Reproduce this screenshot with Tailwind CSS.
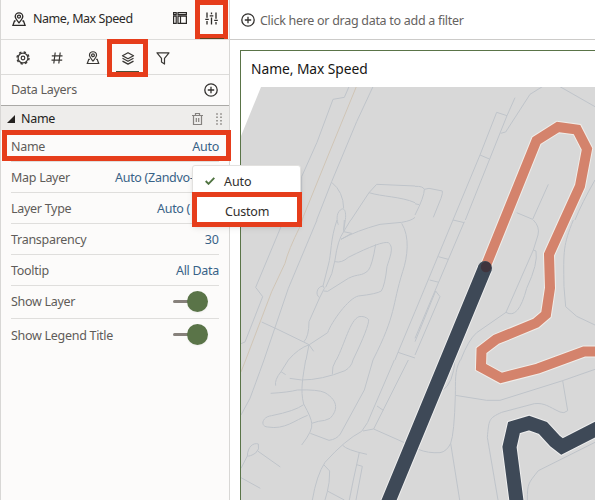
<!DOCTYPE html>
<html lang="en">
<head>
<meta charset="utf-8">
<title>Name, Max Speed</title>
<script src="https://cdn.jsdelivr.net/npm/@tailwindcss/browser@4"></script>
</head>
<body class="relative flex h-[500px] w-[595px] overflow-hidden bg-white font-['Noto_Sans','Open_Sans',sans-serif] text-[12.5px] tracking-[-0.29px] text-[#5f5c59]">
<svg class="hidden">
  <symbol id="pin" viewBox="0 0 14 15"><g fill="none" stroke="currentColor" stroke-width="1.300"><path d="M7 10.8C5.200 8.600 3.200 6.700 3.200 4.600a3.800 3.800 0 0 1 7.600 0C10.800 6.700 8.800 8.600 7 10.800Z"/><circle cx="7" cy="4.600" r="1.500"/><path d="M3.600 9H2.500L.9 13.400H13.100L11.500 9H10.400"/></g></symbol>
  <symbol id="plus" viewBox="0 0 14 14"><g fill="none" stroke="currentColor" stroke-width="1.300"><circle cx="7" cy="7" r="6.200"/><path d="M7 3.800v6.400M3.800 7h6.400"/></g></symbol>
</svg>

<aside class="flex w-[230px] shrink-0 flex-col border-x border-[#d8d7d5] bg-[#fcfbfa]">
  <header class="flex h-10 shrink-0 items-center border-b border-[#dddcda] pl-[11px] text-[#2b2927]">
    <svg class="h-[15px] w-[14px]"><use href="#pin"/></svg>
    <h1 class="ml-[7px] w-[140px] whitespace-nowrap pb-px text-[12.5px] tracking-[-0.45px]">Name, Max Speed</h1>
    <svg class="-mt-1 h-3 w-[14px]" viewBox="0 0 14 12" fill="none" stroke="currentColor" stroke-width="1.200"><path d="M.6.600h2.600v2H.6zM.6 4.200h2.600v7.200H.6zM5 .6h8.400v2H5zM5 4.200h8.400v7.200H5zM7.500 4.200v7.200"/></svg>
    <svg class="-mt-[3px] ml-[18px] h-[13px] w-[13px]" viewBox="0 0 13 13" fill="none" stroke="currentColor" stroke-width="1.300"><path d="M2 .5v5.300M2 9v3.500M6.500.5v1.800M6.500 5.500v7M11 .5v6.300M11 10v2.500M.3 7.300h3.500M4.700 3.800h3.600M9.200 8.300h3.600"/></svg>
  </header>
  <nav class="flex h-[35px] shrink-0 items-center border-b border-[#dddcda] pl-[14.500px] pt-[2px] text-[#3a3835]">
    <svg class="h-[14px] w-[14px]" viewBox="0 0 14 14" fill="none" stroke="currentColor"><circle cx="7" cy="7" r="4.900" stroke-width="1.200"/><circle cx="7" cy="7" r="6" stroke-width="1.400" stroke-dasharray="2.350 2.360"/><circle cx="7" cy="7" r="1.800" stroke-width="1.200"/></svg>
    <svg class="ml-[21px] h-3 w-3" viewBox="0 0 12 12" fill="none" stroke="currentColor" stroke-width="1.200"><path d="M4.200.5 2.800 11.500M9.200.5 7.800 11.500M.8 3.800h10.700M.5 8.200h10.700"/></svg>
    <svg class="ml-[23px] h-[14px] w-[14px]"><use href="#pin"/></svg>
    <svg class="ml-[21px] h-[13px] w-[14px]" viewBox="0 0 14 13" fill="none" stroke="currentColor" stroke-width="1.300" stroke-linejoin="round"><path d="M7 .7 12.500 3.700 7 6.700 1.500 3.700ZM1.500 6.300l5.500 3 5.500-3M1.500 9.100l5.500 3 5.500-3"/></svg>
    <svg class="ml-[21px] h-[13px] w-[14px]" viewBox="0 0 14 13" fill="none" stroke="currentColor" stroke-width="1.200" stroke-linejoin="round"><path d="M1 .8h12L8.500 6.300v5.800l-3-2V6.300Z"/></svg>
  </nav>
  <div class="flex h-[31px] shrink-0 items-center justify-between border-b border-[#aaa9a6] pl-[10px] pr-[11px]">
    <span class="pt-px">Data Layers</span>
    <svg class="h-[14px] w-[14px] text-[#33312f]"><use href="#plus"/></svg>
  </div>
  <div class="flex h-[25px] shrink-0 items-center bg-[#eeedeb] pl-[6px] pr-[7px] text-[#242220]">
    <svg class="h-2 w-2" viewBox="0 0 8 8"><path d="M8 0v8H0Z" fill="currentColor"/></svg>
    <span class="ml-[6px] flex-1 pt-px">Name</span>
    <svg class="h-3 w-[11px] text-[#85827f]" viewBox="0 0 11 12" fill="none" stroke="currentColor" stroke-width="1.200"><path d="M0 2.500h11M3.500 2.500v-2h4v2M1.500 2.500v9h8v-9M4.300 5v4M6.700 5v4"/></svg>
    <svg class="ml-[13px] h-3 w-[6px]" viewBox="0 0 6 12" fill="none" stroke="#85827f" stroke-width="1.500"><path d="M1 .3v12M5 .3v12" stroke-dasharray="1.500 1.800"/></svg>
  </div>
  <div class="mx-[10px] [&_b]:font-normal [&_b]:text-[#386287] [&_span]:pt-[2px]">
    <div class="flex h-[31px] items-center justify-between border-b border-[#dfdedc]"><span>Name</span><b class="pt-[3px]">Auto</b></div>
    <div class="flex h-[31px] items-center border-b border-[#dfdedc]"><span class="w-[104px]">Map Layer</span><b class="whitespace-nowrap pt-[3px]">Auto (Zandvo</b><b class="pt-[3px]">-</b></div>
    <div class="flex h-[31px] items-center border-b border-[#dfdedc]"><span class="w-[146px]">Layer Type</span><b class="pt-[3px]">Auto (</b></div>
    <div class="flex h-[31px] items-center justify-between border-b border-[#dfdedc]"><span>Transparency</span><b class="pt-[2px] tracking-normal">30</b></div>
    <div class="flex h-[31px] items-center justify-between border-b border-[#dfdedc]"><span>Tooltip</span><b class="pt-[3px]">All Data</b></div>
    <div class="flex h-[33px] items-center justify-between border-b border-[#dfdedc] pr-[11px]"><span class="pt-0!">Show Layer</span><i class="flex -translate-y-px items-center"><i class="-mr-px h-[3px] w-[15px] rounded-l bg-[#87817b]"></i><i class="size-[21px] rounded-full bg-[#5a7448] shadow-xs"></i></i></div>
    <div class="flex h-[33px] items-center justify-between pr-[11px]"><span>Show Legend Title</span><i class="flex -translate-y-px items-center"><i class="-mr-px h-[3px] w-[15px] rounded-l bg-[#87817b]"></i><i class="size-[21px] rounded-full bg-[#5a7448] shadow-xs"></i></i></div>
  </div>
</aside>

<main class="flex w-[365px] flex-col">
  <div class="flex h-10 shrink-0 items-center border-b border-[#cccbc9] pl-[11px] text-[#66635f]">
    <svg class="h-[14px] w-[14px] text-[#33312f]"><use href="#plus"/></svg>
    <span class="ml-[5px] whitespace-nowrap pt-[3px]">Click here or drag data to add a filter</span>
  </div>
  <section class="ml-[10px] mt-[10px] flex flex-1 flex-col border-l border-t border-[#5a7448]">
    <h2 class="h-9 pl-[10px] pt-[8px] text-[13.8px] leading-5 tracking-[-0.05px] text-[#161513]">Name, Max Speed</h2>
    <svg class="h-[413px] w-[354px]" viewBox="241 87 354 413" fill="none">
      <path d="M261 87H595V500H241V136Z" fill="#d8d8d8"/>
      <g stroke="#bfc4ca" stroke-width="3" stroke-linejoin="round">
        <g transform="translate(235 80) scale(.33333)">
          <path d="M342 20 328 52 294 58 246 187 200 290 200 345 134 440M414 20 365 125 290 305 245 420M290 307Q325 335 326 385M316 390C302 402 306 425 310 434M316 390C330 378 334 400 331 420L326 450M348 420 402 338 425 313 540 318M402 338C440 350 500 350 540 368"/>
          <path d="M364 20 280 225 205 410 195 440" stroke="#d0c5b6"/>
        </g>
        <g transform="translate(415 80) scale(.33333)">
          <path d="M300 53 276 107 245 97 195 225 223 237M276 107 151 420M195 225 114 420M257 160 272 156 345 43 390 15M435 20 540 80M0 319Q24 318 28 328Q28 350 0 405M28 328 42 325 82 333Q84 338 78 355L55 412M0 371 12 374M400 313 353 418M305 398 353 418M540 300Q500 370 480 420"/>
        </g>
        <g transform="translate(235 220) scale(.33333)">
          <path d="M138 20 62 202 83 230 30 366 18 371M246 0 160 205 87 420M306 0C285 60 290 100 280 135L264 198M328 0 326 35Q308 60 300 120Q295 160 272 202M326 35 350 40 318 58M326 35 347 0M318 58Q365 32 435 13L500 7Q530 2 540 -8M300 125Q320 130 340 112 440 62 460 68C480 80 462 118 456 140Q450 195 439 213Q425 222 370 228C340 235 290 305 278 338L223 374Q190 385 160 420M422 73Q412 135 400 151C380 170 370 160 340 175L278 214 266 213M264 198C245 200 240 225 254 233M264 198 268 205 254 233 222 305Q222 350 206 366M80 306 132 330 206 366 222 374 213 420M222 374 236 394M500 10C525 50 518 110 503 155C470 260 485 280 414 420M304 420C330 370 345 300 372 290Q390 287 401 299Q402 320 354 420M540 275 489 397 540 414M489 397 480 420"/>
          <path d="M195 20Q160 90 150 130L110 215 32 420" stroke="#d0c5b6"/>
        </g>
        <g transform="translate(415 220) scale(.33333)">
          <path d="M114 0 0 275M148 5 42 255 0 355M114 0 148 8M70 110 100 118M44 180 72 187M62 213 75 230 0 405M62 213 0 365M355 0Q375 20 369 45L355 90 273 277Q310 300 335 205Q370 130 363 93L355 90M273 277 185 338Q160 360 137 420M475 0C445 75 445 90 447 200L452 260 485 289 540 315"/>
        </g>
        <g transform="translate(235 360) scale(.33333)">
          <path d="M87 0Q60 75 45 115L18 165M160 0 138 35 152 44M138 35Q118 60 122 77M164 55 200 60Q260 60 330 32 350 20 354 0M303 0Q290 20 292 43M212 0C204 50 195 90 206 132Q230 175 230 190Q235 210 200 255M107 100Q160 97 187 90Q250 88 270 98C315 125 305 155 285 175Q270 183 250 184L230 190M206 134Q180 153 110 167C80 170 75 200 98 201C150 210 180 180 218 166M226 220 282 241Q305 238 316 222L388 90 414 0M478 0 411 156Q400 190 380 214Q330 240 270 307Q245 345 232 420M520 0 416 207 384 213M426 138 445 151M416 207 540 262M323 256Q335 270 396 283M373 277 355 360 343 420M365 314 382 319 363 420M267 315 284 333Q284 370 277 395L270 420M277 393 328 420M18 353 76 385M18 325 37 288C38 260 55 247 70 252Q75 268 62 279Q45 290 37 288M68 273 136 321"/>
          <path d="M32 0 18 36" stroke="#d0c5b6"/>
        </g>
        <g transform="translate(415 360) scale(.33333)">
          <path d="M136 0C118 30 122 70 121 106Q118 220 107 250L134 420M120 0Q115 70 82 92M121 106 215 121H255L443 62 540 28M443 62 458 152Q447 162 435 156C400 140 390 128 358 131L260 157C220 175 222 180 217 232L249 420M10 268Q38 280 75 278Q95 275 107 250M540 247 370 332C340 370 337 370 337 420"/>
        </g>
      </g>
      <path d="M485 268 536.500 140.500 558 127 577 129.500 587 149 580 186 565 219 549 254.500 550 288 546 314.500 536 323 496 339.500 481.500 350.500 481 367 501 378 538 368.500 584 351.500H600" stroke="#f0ede9" stroke-width="12"/>
      <path d="M485 268 536.500 140.500 558 127 577 129.500 587 149 580 186 565 219 549 254.500 550 288 546 314.500 536 323 496 339.500 481.500 350.500 481 367 501 378 538 368.500 584 351.500H600" stroke="#d4836c" stroke-width="10"/>
      <path d="M485 268 387 505M517 505 509.500 447 514 427.500 529 423 543 428 555 441 562 446.500 600 427" stroke="#efefef" stroke-width="16"/>
      <path d="M485 268 387 505M517 505 509.500 447 514 427.500 529 423 543 428 555 441 562 446.500 600 427" stroke="#3e4957" stroke-width="14"/>
      <circle cx="485" cy="268" r="7" fill="#3e4957"/>
      <circle cx="486" cy="267" r="5.200" fill="#40343d"/>
    </svg>
  </section>
</main>

<div class="absolute left-[192px] top-[165px] h-[60px] w-[109px] rounded-[3px] border border-[#e2e1df] bg-white text-[#302e2b] shadow-md">
  <div class="flex h-[28px] items-center pl-[12px] pt-[5px]"><svg class="-mt-1 h-2 w-[10px]" viewBox="0 0 10 8"><path d="M.7 4 3.500 6.800 9.300.8" fill="none" stroke="#4f7340" stroke-width="1.900"/></svg><span class="ml-[9px] tracking-[-0.1px]">Auto</span></div>
  <div class="flex h-[30px] items-center pl-[32px] pt-[6px] tracking-[-0.2px]">Custom</div>
</div>
<div class="absolute left-[192px] top-[192px] h-[35px] w-[109.500px] border-5 border-[#e63d1b]"></div>
<div class="absolute left-[2px] top-[130px] h-[31px] w-[229px] border-5 border-[#e63d1b]"></div>
<div class="absolute left-[195px] top-0 h-[39px] w-[33px] border-5 border-[#e63d1b]"></div>
<div class="absolute left-[200px] top-[38px] h-px w-[24px] bg-[#5b4420]"></div>
<div class="absolute left-[107px] top-[39px] h-[38px] w-[41px] border-5 border-[#e63d1b]"></div>
<div class="absolute left-[116px] top-[71px] h-px w-[23px] bg-[#4c5137]"></div>
</body>
</html>
